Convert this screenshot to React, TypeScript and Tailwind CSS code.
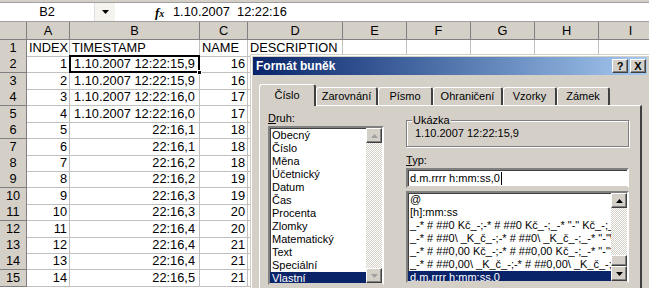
import { ReactNode } from 'react';

// Excel 2003 sheet with the "Formát buněk" dialog on top

const COLS = "grid grid-cols-[27px_43px_130px_48px_95px_64px_64px_64px_64px_64px]";

const rows: string[][] = [
  ['1', '1.10.2007 12:22:15,9', '16'],
  ['2', '1.10.2007 12:22:15,9', '16'],
  ['3', '1.10.2007 12:22:16,0', '17'],
  ['4', '1.10.2007 12:22:16,0', '17'],
  ['5', '22:16,1', '18'],
  ['6', '22:16,1', '18'],
  ['7', '22:16,2', '18'],
  ['8', '22:16,2', '19'],
  ['9', '22:16,3', '19'],
  ['10', '22:16,3', '20'],
  ['11', '22:16,4', '20'],
  ['12', '22:16,4', '21'],
  ['13', '22:16,4', '21'],
  ['14', '22:16,5', '21'],
];

const druh = ['Obecný', 'Číslo', 'Měna', 'Účetnický', 'Datum', 'Čas', 'Procenta', 'Zlomky', 'Matematický', 'Text', 'Speciální'];

const formats = [
  '@',
  '[h]:mm:ss',
  '_-* # ##0 Kč_-;-* # ##0 Kč_-;_-* "-" Kč_-;_-@_-',
  '_-* # ##0\\ _K_č_-;-* # ##0\\ _K_č_-;_-* "-"\\ _K_č_-;_-@_-',
  '_-* # ##0,00 Kč_-;-* # ##0,00 Kč_-;_-* "-"?? Kč_-;_-@_-',
  '_-* # ##0,00\\ _K_č_-;-* # ##0,00\\ _K_č_-;_-* "-"??\\ _K_č_-;_-@_-',
];

const cell = "border-r border-b border-[#c0c0c0] px-[2px] overflow-hidden whitespace-nowrap leading-[16px]";
const hdr = "bg-[#d4d0c8] border-r border-b border-[#808080] text-center leading-[16px]";
const raised = "bg-[#d4d0c8] border border-t-white border-l-white border-r-[#404040] border-b-[#404040] shadow-[inset_-1px_-1px_0_#808080]";
const sunken = "bg-white border-2 border-t-[#808080] border-l-[#808080] border-r-white border-b-[#d4d0c8] shadow-[inset_1px_1px_0_#404040]";
const dither = "bg-[repeating-conic-gradient(#ffffff_0%_25%,#d4d0c8_0%_50%)] bg-[length:2px_2px]";

const Arrow = ({ up = false, disabled = false }: { up?: boolean, disabled?: boolean }) => (
  <svg width="7" height="4" viewBox="0 0 7 4">
    <polygon points={up ? "3.5,0 7,4 0,4" : "0,0 7,0 3.5,4"} fill={disabled ? '#a0a0a0' : '#000'} />
  </svg>
);

const ScrollBtn = ({ up = false, disabled = false }: { up?: boolean, disabled?: boolean }) => (
  <div className={`${raised} w-[16px] h-[15px] flex items-center justify-center shrink-0`}>
    <Arrow up={up} disabled={disabled} />
  </div>
);

const Tab = ({ children, w, active = false }: { children: ReactNode, w: string, active?: boolean }) => (
  <div
    className={`${w} ${active ? 'h-[22px] -mb-px relative z-10' : 'h-[18px]'} bg-[#d4d0c8] border-l border-t border-white border-r-2 border-r-[#404040] rounded-t-[3px] flex items-center justify-center leading-[13px]`}
  >
    {children}
  </div>
);

const App = () => {
  return (
    <div className="w-[649px] h-[288px] relative overflow-hidden bg-white text-black font-['Liberation_Sans',Arial,sans-serif]">
      {/* toolbar remnant */}
      <div className="h-[3px] bg-[#d4d0c8] border-b border-[#a0a0a0]" />

      {/* formula bar */}
      <div className="flex h-[19px] items-center bg-white border-b border-[#a0a0a0] text-[12.8px]">
        <div className="w-[95px] h-full flex items-center justify-center border-r border-[#e0e0e0]">B2</div>
        <div className="w-[20px] h-full flex items-center justify-center bg-[#f5f4ef]">
          <Arrow />
        </div>
        <div className="w-[40px]" />
        <div className="w-[18px] font-['Liberation_Serif',serif] italic font-bold text-[13px] leading-none">
          f<span className="text-[10px]">x</span>
        </div>
        <div className="whitespace-pre">1.10.2007  12:22:16</div>
      </div>

      {/* sheet */}
      <div className="text-[12.8px]">
        <div className={`${COLS} h-[18px]`}>
          <div className="bg-[#d4d0c8] border-r border-b border-[#808080]" />
          {['A', 'B', 'C', 'D', 'E', 'F', 'G', 'H', 'I'].map((c) => (
            <div key={c} className={`${hdr} ${c === 'B' ? 'bg-[#b6bdd2]' : ''} leading-[17px]`}>{c}</div>
          ))}
        </div>

        <div className={`${COLS} h-[16.43px]`}>
          <div className={hdr}>1</div>
          <div className={cell}>INDEX</div>
          <div className={cell}>TIMESTAMP</div>
          <div className={cell}>NAME</div>
          <div className={cell}>DESCRIPTION</div>
          {[0, 1, 2, 3, 4].map((i) => <div key={i} className={cell} />)}
        </div>

        {rows.map((r, i) => (
          <div key={i} className={`${COLS} h-[16.43px]`}>
            <div className={`${hdr} ${i === 0 ? 'bg-[#b6bdd2]' : ''}`}>{i + 2}</div>
            <div className={`${cell} text-right`}>{r[0]}</div>
            <div className={`${cell} text-right pr-[4px] ${i === 0 ? 'relative overflow-visible' : ''}`}>
              {r[1]}
              {i === 0 && (
                <>
                  <div className="absolute -left-px -top-px -right-px -bottom-px border-2 border-black" />
                  <div className="absolute -right-[3px] -bottom-[3px] w-[5px] h-[5px] bg-black border border-white" />
                </>
              )}
            </div>
            <div className={`${cell} text-right`}>{r[2]}</div>
            {[0, 1, 2, 3, 4, 5].map((k) => <div key={k} className={cell} />)}
          </div>
        ))}
      </div>

      {/* dialog */}
      <div className="absolute left-[250px] top-[54px] w-[400px] h-[250px] bg-[#d4d0c8] border border-[#d4d0c8] shadow-[inset_1px_1px_0_#ffffff] p-[2px] text-[11px]">
        <div className="h-[18px] bg-gradient-to-r from-[#0a246a] to-[#a6caf0] flex items-center pl-[3px] pr-[1px]">
          <span className="text-white font-bold text-[12px] leading-none">Formát buněk</span>
          <div className="ml-auto flex gap-[2px]">
            <div className={`${raised} w-[16px] h-[14px] flex items-center justify-center font-bold text-[11px] leading-none`}>?</div>
            <div className={`${raised} w-[16px] h-[14px] flex items-center justify-center font-bold text-[11px] leading-none`}>X</div>
          </div>
        </div>

        {/* tabs */}
        <div className="flex items-end h-[21px] mt-[9px] pl-[6px]">
          <Tab w="w-[57px]" active>Číslo</Tab>
          <Tab w="w-[62px]">Zarovnání</Tab>
          <Tab w="w-[55px]">Písmo</Tab>
          <Tab w="w-[70px]">Ohraničení</Tab>
          <Tab w="w-[54px]">Vzorky</Tab>
          <Tab w="w-[53px]">Zámek</Tab>
        </div>

        {/* panel */}
        <div className="ml-[6px] w-[383px] h-[190px] border-l border-t border-white border-r-2 border-r-[#404040] flex pl-[8px]">
          <div className="w-[116px] pt-[6px]">
            <div className="leading-[13px]"><span className="underline">D</span>ruh:</div>
            <div className={`${sunken} mt-[1px] h-[159px] flex`}>
              <div className="flex-1 overflow-hidden pt-[1px]">
                {druh.map((d) => (
                  <div key={d} className="h-[13px] leading-[13px] pl-[2px] whitespace-nowrap">{d}</div>
                ))}
                <div className="h-[13px] leading-[13px] pl-[2px] bg-[#0a246a] text-white">Vlastní</div>
              </div>
              <div className="w-[16px] flex flex-col">
                <ScrollBtn up disabled />
                <div className={`flex-1 ${dither}`} />
                <ScrollBtn disabled />
              </div>
            </div>
          </div>

          <div className="w-[223px] ml-[22px] pt-[14px]">
            <div className="relative h-[27px] border border-[#808080] shadow-[1px_1px_0_#ffffff,inset_1px_1px_0_#ffffff] pl-[8px] pt-[6px] leading-[13px]">
              <span className="absolute -top-[7px] left-[5px] bg-[#d4d0c8] px-[1px] leading-[13px]">Ukázka</span>
              1.10.2007 12:22:15,9
            </div>

            <div className="mt-[7px] leading-[13px]"><span className="underline">T</span>yp:</div>
            <div className={`${sunken} mt-[1px] h-[20px] flex items-center pl-[2px] whitespace-nowrap`}>
              d.m.rrrr h:mm:ss,0<span className="inline-block w-px h-[13px] bg-black ml-[1px]" />
            </div>

            <div className={`${sunken} mt-[3px] h-[92px] flex`}>
              <div className="flex-1 overflow-hidden">
                {formats.map((f) => (
                  <div key={f} className="h-[13px] leading-[13px] pl-[2px] whitespace-pre">{f}</div>
                ))}
                <div className="h-[13px] leading-[13px] pl-[2px] bg-[#0a246a] text-white whitespace-nowrap">d.m.rrrr h:mm:ss,0</div>
              </div>
              <div className="w-[16px] flex flex-col">
                <ScrollBtn up />
                <div className={`flex-1 ${dither}`} />
                <div className={`${raised} w-[16px] h-[11px] shrink-0`} />
                <ScrollBtn />
              </div>
            </div>
          </div>
        </div>
      </div>
    </div>
  );
};

export default App;
